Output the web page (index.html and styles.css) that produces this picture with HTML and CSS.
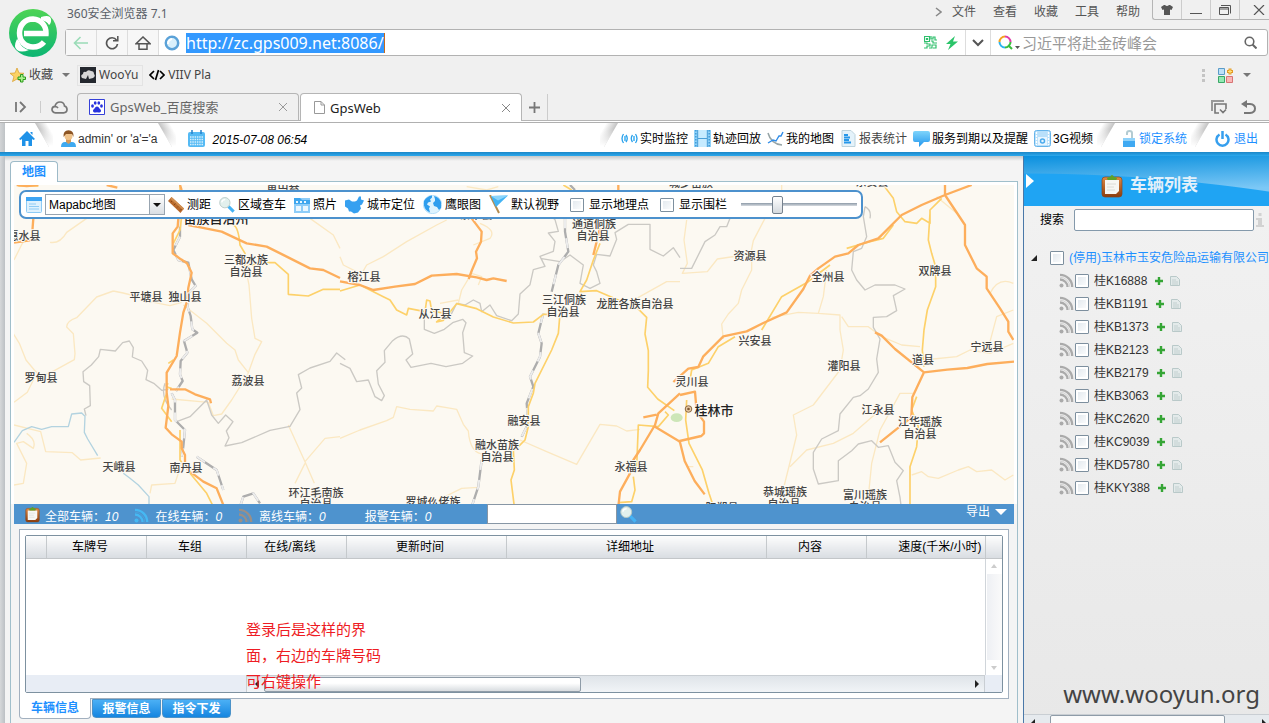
FILE: index.html
```html
<!DOCTYPE html>
<html lang="zh-CN">
<head>
<meta charset="utf-8">
<title>GpsWeb</title>
<link rel="stylesheet" href="styles.css">
</head>
<body>
<svg class="defs" aria-hidden="true">
  <defs>
    <linearGradient id="g-green" x1="0" y1="0" x2="0" y2="1"><stop offset="0" stop-color="#4ed455"/><stop offset="1" stop-color="#0cb573"/></linearGradient>
    <linearGradient id="g-blue" x1="0" y1="0" x2="0" y2="1"><stop offset="0" stop-color="#7fd4fb"/><stop offset="1" stop-color="#2196ee"/></linearGradient>
    <linearGradient id="g-edge" gradientUnits="userSpaceOnUse" x1="5" y1="9" x2="14" y2="4"><stop offset="0" stop-color="#c2c2c2"/><stop offset="1" stop-color="#fff"/></linearGradient>
    <linearGradient id="g-fade" gradientUnits="userSpaceOnUse" x1="0" y1="6" x2="0" y2="23"><stop offset="0" stop-color="#fff" stop-opacity="0"/><stop offset="1" stop-color="#fff"/></linearGradient>
    <linearGradient id="g-wood" x1="0" y1="0" x2="0" y2="1"><stop offset="0" stop-color="#e08a45"/><stop offset="1" stop-color="#8a3c0e"/></linearGradient>
    <symbol id="i-fold" viewBox="0 0 18 24"><path d="M0 0l14 24h4V0z" fill="url(#g-edge)"/><path d="M0 0l14 24h4V0z" fill="url(#g-fade)"/></symbol>
    <symbol id="i-rss" viewBox="0 0 15 15"><circle cx="2.5" cy="12.5" r="2"/><path d="M1 6.5A7.5 7.5 0 0 1 8.5 14M1 1.8A12.2 12.2 0 0 1 13.2 14" fill="none" stroke="currentColor" stroke-width="2.3"/><path d="M1 4.2A9.8 9.8 0 0 1 10.8 14" fill="none" stroke="currentColor" stroke-width=".8" opacity=".5"/></symbol>
    <symbol id="i-plus" viewBox="0 0 10 10"><path d="M5 1v8M1 5h8" stroke="#35a535" stroke-width="2.4" fill="none"/></symbol>
    <symbol id="i-doc" viewBox="0 0 10 10"><path d="M.5 .5h6l3 3v6h-9z" fill="#e3eaea" stroke="#b9c9c9"/><path d="M2 4h4M2 6h6M2 8h6" stroke="#b5c6c6" stroke-width=".7"/></symbol>
    <symbol id="i-clip" viewBox="0 0 22 24"><rect x="1" y="3" width="20" height="20" rx="3" fill="url(#g-wood)" stroke="#8a461c" stroke-width=".7"/><path d="M4 6h14v11l-3 3H4z" fill="#f7f7f4"/><path d="M6 10h9M6 13h7M6 16h8" stroke="#d5d5d0" stroke-width=".8"/><path d="M6 5q0-2 3-2 2-4 4 0 3 0 3 2l-1 1H7z" fill="#5da227"/></symbol>
    <symbol id="i-mag" viewBox="0 0 18 18"><path d="M10.5 10.5l6 6" stroke="#45b2f4" stroke-width="3.4"/><circle cx="6.6" cy="6.4" r="5.8" fill="#e2f0ed" stroke="#b6c9c6"/><path d="M3 6a4 4 0 0 1 4-3" fill="none" stroke="#fff" stroke-width="1.5"/></symbol>
  </defs>
</svg>

<header class="browser">
  <svg class="logo" viewBox="0 0 48 48"><circle cx="24" cy="24" r="24" fill="url(#g-green)"/><path d="M15 24.500h22A13.500 13.500 0 0 0 24 10C16 10 10.500 16 10.500 24S16 38 24 38q7 0 11-5" fill="none" stroke="#fff" stroke-width="5.500"/><path d="M32 8q9-3 10 2 .500 4-2 6-2-4-8-5zM8 30q-4 8 0 11 4 3 12 0-7-1-10-9z" fill="#fff"/></svg>
  <div class="title-row">
    <span class="app-title">360安全浏览器 7.1</span>
    <nav class="menu"><svg class="chev" viewBox="0 0 7 10"><path d="M1 1l5 4-5 4"/></svg><button>文件</button><button>查看</button><button>收藏</button><button>工具</button><button>帮助</button></nav>
    <div class="window-buttons">
      <button aria-label="皮肤"><svg viewBox="0 0 12 10"><path d="M3 0h1q2 2 4 0h1l3 2-1.500 3L9 4.500V10H3V4.500L1.500 5 0 2z" fill="#555"/></svg></button>
      <button aria-label="最小化"><svg viewBox="0 0 12 10"><path d="M0 8.500h12" stroke="#555"/></svg></button>
      <button aria-label="还原"><svg viewBox="0 0 12 10"><path d="M.5 2.500h9v7h-9zM.5 4h9M2 .5h9.500v8" fill="none" stroke="#555"/></svg></button>
      <button aria-label="关闭"><svg viewBox="0 0 12 10"><path d="M1 0l10 10M11 0L1 10" stroke="#555" stroke-width="1.200"/></svg></button>
    </div>
  </div>
  <div class="address">
    <button class="nav-btn" aria-label="后退"><svg viewBox="0 0 16 14"><path d="M15 7H2M7.500 1l-6 6 6 6" fill="none" stroke="#9bdcb8" stroke-width="1.600"/></svg></button>
    <button class="nav-btn" aria-label="刷新"><svg viewBox="0 0 16 14"><path d="M12.500 4A5.500 5.500 0 1 0 13.500 8" fill="none" stroke="#555" stroke-width="1.700"/><path d="M9 4.800h4.800V0" fill="none" stroke="#555" stroke-width="1.500"/></svg></button>
    <button class="nav-btn" aria-label="主页"><svg viewBox="0 0 16 14"><path d="M4 7v6.300h8V7M1 7.700L8 1l7 6.700z" fill="none" stroke="#555" stroke-width="1.500"/></svg></button>
    <svg class="site" viewBox="0 0 16 16"><circle cx="8" cy="8" r="6.200" fill="#d9f0fc" stroke="#5ba2d8" stroke-width="2.500"/><path d="M4 9a5 5 0 0 1 4-5" stroke="#fff" stroke-width="2" fill="none"/></svg>
    <label class="url"><span class="selected" contenteditable="true" role="textbox" aria-label="网址">http://zc.gps009.net:8086/</span></label>
    <svg class="qr" viewBox="0 0 13 13"><path d="M.5 .5h5v5h-5zM2.500 2.500h1v1h-1zM7 0v3h2V1h2v3h2M7 5h2v2h4M0 7h3v1h3v2H3v2H0M5 12h3V9h2M9 9h3v3H9" fill="none" stroke="#2fbf6c" stroke-width="1.200"/></svg>
    <svg class="bolt" viewBox="0 0 12 14"><path d="M9 0L0 8h4.500L2 14 12 5.500H7z" fill="#2bc469"/></svg>
    <button class="down" aria-label="历史"><svg viewBox="0 0 12 8"><path d="M1 1l5 5 5-5" fill="none" stroke="#555" stroke-width="2"/></svg></button>
    <div class="web-search">
      <svg class="so" viewBox="0 0 22 15"><g fill="none" stroke-width="2"><path d="M1.500 7A5.500 5.500 0 0 1 7 1.500" stroke="#f4a11e"/><path d="M7 1.500A5.500 5.500 0 0 1 12.500 7" stroke="#e03ca8"/><path d="M1.500 7A5.500 5.500 0 0 0 7 12.500" stroke="#2cb4ee"/><path d="M12.500 7A5.500 5.500 0 0 1 7 12.500M10 10l4 4" stroke="#39bd3e"/></g><path d="M17 11h5l-2.500 3z" fill="#555"/></svg>
      <input type="text" aria-label="搜索" placeholder="习近平将赴金砖峰会">
      <svg class="find" viewBox="0 0 13 13"><circle cx="5.500" cy="5.500" r="4.300" fill="none" stroke="#666" stroke-width="1.600"/><path d="M8.500 8.500l4 4" stroke="#666" stroke-width="2"/></svg>
    </div>
  </div>
  <div class="bookmarks">
    <button class="fav"><svg viewBox="0 0 16 15"><path d="M7 0l2 5 5 .3-4 3.300 1.500 5L7 11l-4.500 2.600L4 8.600 0 5.300 5 5z" fill="#fbd264" stroke="#dba339" stroke-width=".8"/><path d="M10.500 6.500h2.500v2.500h2.500v2.500H13V14h-2.500v-2.500H8V9h2.500z" fill="#a9f08a" stroke="#2b9a1d"/></svg>收藏<i class="tri"></i></button>
    <a href="#" class="bm boxed"><svg viewBox="0 0 16 16"><path d="M0 0h16v16H0z" fill="#24282f"/><path d="M2 11q-2-3 1-4 0-3 3-2 2-3 5-1 3 0 3 3 2 2-1 4l-4 1-1-4-2 4z" fill="#d7d7d7"/></svg>WooYu</a>
    <a href="#" class="bm"><svg viewBox="0 0 16 10"><path d="M5 1L1 5l4 4M11 1l4 4-4 4M9.500 0l-3 10" fill="none" stroke="#000" stroke-width="1.700"/></svg>VIIV Pla</a>
    <span class="bm-tools"><svg class="dots" viewBox="0 0 3 13"><path d="M0 0h3v3H0zM0 5h3v3H0zM0 10h3v3H0z" fill="#c4c4c4"/></svg><svg class="apps" viewBox="0 0 16 15"><path d="M.5 .5h6v6h-6z" fill="#bde0f7" stroke="#5a9cc9"/><path d="M.5 8.500h6v6h-6z" fill="#93e9b4" stroke="#3aa767"/><path d="M8.500 8.500h6v6h-6z" fill="#fab6b6" stroke="#d77474"/><path d="M12 .5v6M9 3.500h6" stroke="#e39a26" stroke-width="3"/><path d="M12 1.500v4M10 3.500h4" stroke="#ffe27a" stroke-width="1.200"/></svg><i class="tri"></i></span>
  </div>
  <div class="tabs">
    <svg class="side" viewBox="0 0 12 12"><path d="M1 1v10M5 1l5 5-5 5" fill="none" stroke="#777" stroke-width="1.800"/></svg>
    <i class="bar"></i>
    <svg class="cloud" viewBox="0 0 17 13"><path d="M4.500 11.800Q1 11.500 1 8.300 1.200 5.500 4 5.300 5 1 9 1t4.500 4Q16 5.700 16 8.400 16 11.500 12.500 11.800zM4 5.500q2 0 3 1.500" fill="none" stroke="#777" stroke-width="1.700"/></svg>
    <div class="tab"><svg class="paw" viewBox="0 0 16 16"><path d="M.5 .5h15v15H.5z" fill="#fff" stroke="#3540d8"/><g fill="#2833dd"><ellipse cx="3.500" cy="7" rx="1.400" ry="1.800"/><ellipse cx="6.200" cy="4" rx="1.400" ry="1.800"/><ellipse cx="9.800" cy="4" rx="1.400" ry="1.800"/><ellipse cx="12.500" cy="7" rx="1.400" ry="1.800"/><path d="M8 7.500q1.500 0 2.500 2 2.500 2 1 3.500-1 1-3.500.3-2.500.7-3.500-.3-1.500-1.500 1-3.500 1-2 2.500-2z"/></g></svg><span>GpsWeb_百度搜索</span><button aria-label="关闭标签"><svg viewBox="0 0 8 8"><path d="M0 0l8 8M8 0L0 8" stroke="#999"/></svg></button></div>
    <div class="tab active"><svg class="page" viewBox="0 0 11 13"><path d="M.5 .5H7l3.500 3.500v8.500H.5zM7 .5V4h3.500" fill="#fff" stroke="#999"/></svg><span>GpsWeb</span><button aria-label="关闭标签"><svg viewBox="0 0 8 8"><path d="M0 0l8 8M8 0L0 8" stroke="#888"/></svg></button></div>
    <button class="add" aria-label="新标签"><svg viewBox="0 0 11 11"><path d="M5.500 0v11M0 5.500h11" stroke="#777" stroke-width="1.800"/></svg></button>
    <span class="tab-tools"><svg viewBox="0 0 16 15"><path d="M1 11V1h12" fill="none" stroke="#999" stroke-width="2"/><path d="M8 13H4V4h11v5M9 9.500l3 3 3-3" fill="none" stroke="#777" stroke-width="1.600"/></svg><svg viewBox="0 0 16 15"><path d="M3 4h6q5 .5 5 4.500T9 13H3" fill="none" stroke="#777" stroke-width="2"/><path d="M0 4l6-4v8z" fill="#777"/></svg></span>
  </div>
</header>

<div class="app">
  <header class="topbar">
    <a href="#" class="home" aria-label="主页"><svg viewBox="0 0 16 15"><path d="M8 0l8 8-1.500 1L13 8v7h-3.500v-5h-3v5H3V8L1.500 9 0 8zM11.500 1h2v3l-2-2z" fill="#1f92e8"/></svg></a>
    <svg class="fold" viewBox="0 0 18 24"><use href="#i-fold"/></svg>
    <span class="user"><svg viewBox="0 0 15 17"><path d="M0 17q0-5 4-5h7q4 0 4 5z" fill="#3ea9f0"/><path d="M5 9h5v3l-2.500 2L5 12z" fill="#d79a58"/><circle cx="7.500" cy="6" r="4" fill="#efc28a"/><path d="M2.500 7Q2 .2 7.500 .2T12.500 7l-1.500-3H5z" fill="#8d5524"/></svg>admin' or 'a'='a</span>
    <svg class="fold" viewBox="0 0 18 24"><use href="#i-fold"/></svg>
    <span class="clock"><svg viewBox="0 0 17 17"><rect y="2" width="17" height="15" rx="2" fill="#55baf4"/><path d="M4 0v4M13 0v4" stroke="#2680c8" stroke-width="1.500"/><path d="M2 7h13M2 9.500h13M2 12h13M2 14.500h13" stroke="#d5effc" stroke-width="1.600" stroke-dasharray="1.500 .8"/></svg><time>2015-07-08 06:54</time></span>
    <svg class="fold right" viewBox="0 0 18 24"><g transform="matrix(-1 0 0 1 18 0)"><use href="#i-fold"/></g></svg>
    <nav class="links">
      <a href="#"><svg viewBox="0 0 17 17"><g fill="none" stroke="#2aa1ec" stroke-width="1.300"><path d="M2.500 4q-3 4.500 0 9M5 5q2.500 3.500 0 7M11.500 5q-2.500 3.500 0 7M14.500 4q3 4.500 0 9"/></g><path d="M3 6h2v5H3zM12 6h2v5h-2z" fill="#69c2f5"/></svg>实时监控</a>
      <a href="#"><svg viewBox="0 0 17 17"><path d="M0 0h17v17H0z" fill="#8fd1f8"/><path d="M4 0h9v17H4z" fill="#c6ebff"/><path d="M4 8.500h9M3.700 0v17M13.300 0v17" stroke="#4a9fd8"/><path d="M1.800 0v17M15.200 0v17" stroke="#3f9bd8" stroke-width="1.500" stroke-dasharray="1.500 1.500"/></svg>轨迹回放</a>
      <a href="#"><svg viewBox="0 0 17 17"><path d="M1 3q3 11 14 12" fill="none" stroke="#96a4a6" stroke-width="1.500"/><path d="M1 13l5-3 3 1 3-5h2l2-4" fill="none" stroke="#2f8ce8" stroke-width="1.400"/></svg>我的地图</a>
      <a href="#" class="soft"><svg viewBox="0 0 17 17"><path d="M2 .5h9l4 4v12H2z" fill="#e4f2fa" stroke="#bcd2dc"/><path d="M4 5h4M4 7.500h6M4 10h5M4 12.500h7" stroke="#2797e9" stroke-width="1.900"/></svg>报表统计</a>
      <a href="#"><svg viewBox="0 0 17 17"><path d="M2 1h13q2 0 2 2v7q0 2-2 2h-4l-5 5v-5H2q-2 0-2-2V3q0-2 2-2z" fill="url(#g-blue)"/></svg>服务到期以及提醒</a>
      <a href="#"><svg viewBox="0 0 17 17"><rect x=".5" y=".5" width="16" height="16" rx="2" fill="#b9e0fa" stroke="#66b4ea"/><rect x="4" y="7" width="9" height="8" fill="#e9f6ff"/><circle cx="8.500" cy="11" r="2" fill="none" stroke="#4cabed" stroke-width="1.500"/><path d="M2.500 2v13M14.500 2v13" stroke="#fff" stroke-width="1.300" stroke-dasharray="2 1"/></svg>3G视频</a>
    </nav>
    <svg class="fold right" viewBox="0 0 18 24"><g transform="matrix(-1 0 0 1 18 0)"><use href="#i-fold"/></g></svg>
    <a href="#" class="act lock"><svg viewBox="0 0 12 17"><path d="M4 5V3q0-2 2.500-2T9 3v5" fill="none" stroke="#b3cbd2" stroke-width="2"/><path d="M0 8h12v9H0z" fill="#3fa9f2"/><path d="M0 8h12v3H0z" fill="#8fd2fa"/></svg>锁定系统</a>
    <svg class="fold right" viewBox="0 0 18 24"><g transform="matrix(-1 0 0 1 18 0)"><use href="#i-fold"/></g></svg>
    <a href="#" class="act exit"><svg viewBox="0 0 15 16"><path d="M4.500 3.500a6 6 0 1 0 6 0M7.500 0v8" fill="none" stroke="#369fee" stroke-width="2.500"/></svg>退出</a>
  </header>

  <div class="body">
    <i class="edge"></i>
    <main class="work">
      <div class="main-tab"><button>地图</button></div>
      <div class="frame">
        <section class="map">
          <svg class="canvas" viewBox="14 185 1000 319" preserveAspectRatio="xMidYMid slice">
            <rect x="14" y="185" width="1000" height="319" fill="#fcf9f2"/>
            <g transform="translate(0 180) scale(.33333)">
              <g class="minor">
                <path d="M150 187q30 5 50-30l60-42M42 240l30-60M340 333q60 10 110 32l60 12 35-10M340 333l-50 18-60 62q-30 10-30 28l20 20 5 60-2 18-60 33-40 18-20-20-25-30-20-50-22-35M104 592l-22 45-40 30M550 375l70 55 60 60 25 20 10 30 30 38 20-55 20-38-20-10-10-60-8-100q-8-30-8-60M745 580l-50 80-30 42-25 5-15-40-110-10M930 115l70 50 20 40M42 735l80 20 15 60 80 3 25 22 60-6M80 760q30 20 20 45l-30-20-20 5 30 60-10 60-28 5M450 940l5-25 70-5 20-60M865 735l50 110 28 65M915 845l60-70 45-5M915 850l-30 60"/>
              </g>
              <g class="admin"><path d="M258 707l-5-20 18-10-2-60-18-12-2-30 25-20 22-25 5-22 45 5 22-25 20-5 12 20-3 28 28 12 18 28-5 28 25 12 22 20 20-3M495 610q-15 40 20 80M530 725l40-15 50-50 15 45 20 25 22-25 22 20-20 28 8 20-12 25 50-10 35-15 50-22 60-12 30-50-10-50 15-15-10-40 35-20 60-20 20-25 26 20"/></g>
              <g class="river"><path d="M42 787l25-35 28-12 30 8 30-8h50l10-38 30-3 10 10-2 48 10 20 30 50M370 880l20 15 25 20 32 35v30"/></g>
              <g class="rail"><path d="M540 110v60l-20 40 15 30 30 8 10 50 12 20-20 20-5 40 10 30 5 40 15 10-40 25 10 35-20 25-2 40 8 20-20 30M515 640l10 20v60l30 30-5 50-5 30M590 830l60 40 20 60M720 980l10-30 30-10 20 30"/></g>
              <g class="rail-light"><path d="M540 110v60l-20 40 15 30 30 8 10 50 12 20-20 20-5 40 10 30 5 40 15 10-40 25 10 35-20 25-2 40 8 20-20 30M515 640l10 20v60l30 30-5 50-5 30M590 830l60 40 20 60M720 980l10-30 30-10 20 30"/></g>
              <g class="second"><path d="M700 135q15 5 20 60l15 25v38l70-10 20 0 40 35v60l60 5 45-20 50 0M545 110l-5 40-20 40M520 540l-15 10M505 610q-15 10 10 15M500 640l-15 45 30 40M540 750v90l30 40 50 60 20 40M540 5v30M55 18h60"/></g>
              <g class="major"><path d="M100 115l-5 65-53 8M50 15l30 3 35-3M320 15l32 8M540 15l5 15M535 115l-2 25-15 20v60l25 18 18 12 14 28-10 45-5 45-10 30-10 60-10 70-30 50v60l5 40-8 65 18 20 30 22v20l10 20v30l15 20 40 30 40 20 20 50 10 30M510 628h45l30 15 45 15 3 12M565 135l40 8 60 12 75 35 60 10 60 30 70 35 40 5 50 24"/></g>
            </g>
            <g transform="translate(340 180) scale(.33333)">
              <g class="minor"><path d="M60 290l20-35 50-25 70-45 90-50 30-15M0 230l10 25 50 25M420 130q50 20 30 45l-50 20M355 370l10-40 30-50 30 10-10 25M300 370l55-10M0 775l60-25 80-28 20-10 10-32 40 8 70 5 10-15 30 5 30 5 20 45 15 20q5 70 50 70M540 780l80 35 90 38 70-120 50 5 30 15 40-5M890 355l90-50h40M315 950l50-25 50-3M380 20l60 10 35-10"/></g>
              <g class="admin"><path d="M0 550l30 15 20 40 35-5 20 50 20 12 8-15-18-35-5-40 25-25-2-35 25-30q30-25 50-5l10 45-20 18 15 22 60-12 45 10 50-10 30-22-25-10-5-60 10-30-10-10-30 10-25 20-30 12-30-12v-45M330 410l20-40 25 5 25-15 20 10 5 25 25-20 20 32 45 15 20-20 5-60 30-28 10-45 35-10-15-30 40-15 5-30-20-25 30-5-10-35-20-20v-20M600 235l60 10 30-20 40 30-10 55 30 15 30-15-10-35-10-20 10-32 40 5 20-50-5-20 40-25h65v75l40 20 30-25 20 30"/></g>
              <g class="rail"><path d="M675 115v40l10 60-30 40-20 80M610 400l-15 60 10 30-5 40-30 60 10 30-20 50 5 60-20 40M425 840l-10 80-20 60M690 15l15 15"/></g>
              <g class="rail-light"><path d="M675 115v40l10 60-30 40-20 80M610 400l-15 60 10 30-5 40-30 60 10 30-20 50 5 60-20 40M425 840l-10 80-20 60"/></g>
              <g class="second"><path d="M0 333l60-18 70 35 20 10 20 30 30 15 5-20 50 10 5-35 10 3 5 30 45 8-30 25 20-5 40-50 60 15 50 25 60 18 60-3 30-23h30M780 190l-20 50-20 60-20 35 50-3 70 30 50 20 30 30-5 50 10 50v60l-2 50 30 35 50 35M660 400l-5 60-20 50-50 100-5 30-15 40v60l-10 40-20 20M520 810l3 60-10 30 10 80M890 860l5-125 60 5 30-35-10-10M880 890l5 40-10 35-40 3M670 15l25 15"/></g>
              <g class="major"><path d="M0 304l60 11 40 15 65-10 60-8 50-25 75-5 60 10 30 8 20-5 40 8M395 115l30 40-2 30-15 30 3 20-15 35-10 27M780 145l-20 80M835 980l5-45 30-55 10-40 20-30 45-75 10-35 65-60M910 712l40-8M945 740l75 45M835 15v30"/></g>
              <ellipse cx="1010" cy="713" rx="18" ry="13" fill="#cde6b8"/>
            </g>
            <g transform="translate(680 180) scale(.33333)">
              <g class="minor"><path d="M20 120l-8 60 10 70-15 30 75-5 30-38 100-15 8-40 35-67M215 235v35l-30 60-10 40-30 32-20 30 5 45M440 270l-10 80-15 50-60-3-80 15M415 400l65 5v45l10 60-10 60-80 105-60 30 10 60-22 90-15 60M485 410l20 30h60l40 30 60 25 55 5M730 540l100-10 40-20 60 10 70-30M700 640h-40l-60 110-25 100-10 100M600 690l-80 70-60 30-80 20-50 50M695 885l30-10 20 15 30 5 60-25 30-10 25 15 45-5 40 30 25-15M770 50l60 50M1000 310q-45-20-70 30M1000 390l-50 20-20 75M305 15v15M20 860h20"/></g>
              <g class="admin"><path d="M0 265h35l40-80 30-20 15-25 20 0 10-25M555 80l-5 30 10 60-15 35-25 10-5 55 15 30 25 30 30-15h60l30 12-35 20 10 45-30 18-40 2v30l20 35-10 60 5 40-30 50-25 20-20 5-40 50-5 50-50 25-25 40v50l15 45 60-10v-60l40-30 20-20 40-10 20 20 30-5 20 50 25 25-20 30 10 50 5 40M555 80q20 10 15 35"/></g>
              <g class="second"><path d="M610 15l30 40 10 40 25 30 35 5 15-15 25 15V90l20-20 15-15M750 100l-5 80 10 40 12 40 0 60-25 70-10 60-5 60 5 50M30 600l5-30 50-20 30-50 50-30M245 450l60-100 80-45 20-15M410 285l40-30M500 205l70-20 40-10 30-40M20 660l-3 60 10 70 40 80 20 70 10 30M710 650l-15 40 20 50-5 60-20 60v120"/></g>
              <g class="major"><path d="M875 15l-80 30-70 30-60 30-70 70-60 20-30 25-40 10-50 35-25 22-20 40-50 70-70 32-50 25-70 15-60 60-15 32-30 5-45 40M795 15v30l60 90v60l35 70 30 25v35l40 60 25 40v30l15 25M585 457l20 10 40 40 87 70 70-8 60-5 60-12 80-7M732 577l-35 75-3 60-50 40-44 35M0 645l45-10 5 60 22 30v35l-8 8-65 15 15 60 30 60 30 40"/></g>
            </g>
            <circle cx="688.500" cy="409" r="3.300" fill="#e7c9a3" stroke="#8b6843"/><circle cx="688.500" cy="409" r="1.300" fill="#805a35"/>
            <g class="place">
              <text x="24" y="240">惠水县</text><text x="283" y="189">雷山县</text><text x="246" y="264">三都水族</text><text x="246" y="276">自治县</text><text x="364" y="281">榕江县</text><text x="146" y="301">平塘县</text><text x="185" y="301">独山县</text><text x="435" y="318">从江县</text><text x="248" y="385">荔波县</text><text x="41" y="382">罗甸县</text><text x="119" y="471">天峨县</text><text x="186" y="472">南丹县</text><text x="316" y="497">环江毛南族</text><text x="316" y="508">自治县</text><text x="433" y="506">罗城仫佬族</text><text x="524" y="425">融安县</text><text x="497" y="449">融水苗族</text><text x="497" y="461">自治县</text><text x="631" y="471">永福县</text><text x="564" y="304">三江侗族</text><text x="563" y="316">自治县</text><text x="635" y="308">龙胜各族自治县</text><text x="594" y="228">通道侗族</text><text x="593" y="240">自治县</text><text x="476" y="219">黎平县</text><text x="750" y="260">资源县</text><text x="828" y="281">全州县</text><text x="935" y="275">双牌县</text><text x="755" y="345">兴安县</text><text x="692" y="386">灵川县</text><text x="844" y="370">灌阳县</text><text x="987" y="351">宁远县</text><text x="923" y="364">道县</text><text x="878" y="414">江永县</text><text x="920" y="426">江华瑶族</text><text x="920" y="438">自治县</text><text x="785" y="496">恭城瑶族</text><text x="784" y="508">自治县</text><text x="865" y="499">富川瑶族</text><text x="865" y="511">自治县</text><text x="722" y="512">阳朔县</text><text x="691" y="187">城步苗族</text><text x="872" y="186">东安县</text>
              <text class="city" x="714" y="415">桂林市</text><text class="city" x="216" y="223">苗族自治州</text>
            </g>
          </svg>
          <div class="map-tools">
            <svg class="w16" viewBox="0 0 16 16"><rect x=".5" y=".5" width="15" height="15" rx="1" fill="#dff1fd" stroke="#8ecbf5"/><path d="M0 0h16v4H0z" fill="#3da4f3"/><path d="M3 7h7M3 9.500h10M3 12h10" stroke="#8fcbf5"/></svg>
            <span class="picker"><select aria-label="地图类型"><option>Mapabc地图</option></select></span>
            <button><svg class="w16" viewBox="0 0 16 16"><path d="M3.500 0L16 11.500 12.500 16 0 4z" fill="#b96a2c"/><path d="M3.500 0L16 11.500l-1 1.500L2.300 1.800z" fill="#d08e50"/><path d="M3 5l1-1M6 8l1.500-1.500M9 10.500l1-1M12 13.500l1.500-1.500" stroke="#713a10" stroke-width=".7"/></svg>测距</button>
            <button><svg class="w16" viewBox="0 0 18 18"><use href="#i-mag"/></svg>区域查车</button>
            <button><svg class="w16" viewBox="0 0 16 16"><path d="M0 1h16v15H0z" fill="#8dccf8"/><path d="M0 1h6l2 2h8v4H0z" fill="#3ea6ee"/><path d="M2 4h2v2H2zM6 4h2v2H6zM10 4h2v2h-2zM2 9h5v5H2zM9 9h5v5H9z" fill="#eaf6fe"/></svg>照片</button>
            <button><svg class="w19" viewBox="0 0 19 16"><path d="M0 4l4-1 3 2 3 0 2-1 2-4 2 0 0 3 3 1-2 4-2 1 1 3-3 4-4 1-3-2-2 0-1-3-3-2z" fill="#36a0f0"/></svg>城市定位</button>
            <button><svg class="w19" viewBox="0 0 19 19"><circle cx="9.500" cy="9.500" r="9.200" fill="#def3fe" stroke="#93d0f6" stroke-width=".6"/><path d="M1 6q3-5 8-5.500l0 2-2 2 1 2-3 1-1 2 3 2-1 2 1 4q-5-2-6-7zM11 1q5 1 7 6l0 6-2 2-2-3-3-1-1-3 2-2 0-2z" fill="#2f9eee"/></svg>鹰眼图</button>
            <button><svg class="w19" viewBox="0 0 19 19"><path d="M1 0l9 18" stroke="#b58b4d" stroke-width="2"/><path d="M2 1l17-.5L7 12z" fill="#42b3f4"/><path d="M2 1l17-.5-10 5z" fill="#8ad4fb"/></svg>默认视野</button>
            <label class="first"><input type="checkbox">显示地理点</label>
            <label><input type="checkbox">显示围栏</label>
            <input class="zoom" type="range" min="0" max="100" value="29" aria-label="缩放">
          </div>
        </section>
        <section class="status">
          <svg class="clip" viewBox="0 0 22 24"><use href="#i-clip"/></svg>
          <span>全部车辆：<em>10</em></span>
          <svg class="rss on" viewBox="0 0 15 15"><use href="#i-rss"/></svg><span>在线车辆：<em>0</em></span>
          <svg class="rss off" viewBox="0 0 15 15"><use href="#i-rss"/></svg><span>离线车辆：<em>0</em></span>
          <span class="alarm">报警车辆：<em>0</em></span>
          <input type="text" aria-label="查找车辆">
          <svg class="glass" viewBox="0 0 18 18"><use href="#i-mag"/></svg>
          <button class="export">导出<i></i></button>
        </section>
        <section class="panel">
          <div class="grid">
            <table>
              <colgroup><col class="c-s"><col class="c-m"><col class="c-m"><col class="c-m"><col class="c-t"><col><col class="c-m"><col class="c-v"><col class="c-e"></colgroup>
              <thead><tr><th></th><th>车牌号</th><th>车组</th><th>在线/离线</th><th>更新时间</th><th>详细地址</th><th>内容</th><th class="end">速度(千米/小时)</th><th></th></tr></thead>
            </table>
            <div class="rows"><div class="vscroll"><i class="up"></i><b></b><i class="dn"></i></div></div>
            <div class="hrow"><div class="hscroll"><i class="lt"></i><b></b><i class="rt"></i></div><i class="corner"></i></div>
            <p class="note">登录后是这样的界<br>面，右边的车牌号码<br>可右键操作</p>
          </div>
        </section>
        <nav class="sheet-tabs"><button class="on">车辆信息</button><button>报警信息</button><button>指令下发</button></nav>
      </div>
    </main>

    <aside class="side-panel">
      <div class="side-head"><i class="fold-arrow"></i><svg viewBox="0 0 22 24"><use href="#i-clip"/></svg><h2>车辆列表</h2></div>
      <div class="side-search"><label for="q">搜索</label><input id="q" type="text"><svg viewBox="0 0 8 14"><path d="M2.500 0h3v3h-3zM0 5h6v7h2v2H0v-2h2V7H0z" fill="#d2d2d2"/></svg></div>
      <div class="group"><i></i><label><input type="checkbox">(停用)玉林市玉安危险品运输有限公司</label></div>
      <ul class="tree">
        <li><svg class="sig" viewBox="0 0 15 15"><use href="#i-rss"/></svg><label><input type="checkbox">桂K16888</label><svg class="sm" viewBox="0 0 10 10"><use href="#i-plus"/></svg><svg class="sm" viewBox="0 0 10 10"><use href="#i-doc"/></svg></li>
        <li><svg class="sig" viewBox="0 0 15 15"><use href="#i-rss"/></svg><label><input type="checkbox">桂KB1191</label><svg class="sm" viewBox="0 0 10 10"><use href="#i-plus"/></svg><svg class="sm" viewBox="0 0 10 10"><use href="#i-doc"/></svg></li>
        <li><svg class="sig" viewBox="0 0 15 15"><use href="#i-rss"/></svg><label><input type="checkbox">桂KB1373</label><svg class="sm" viewBox="0 0 10 10"><use href="#i-plus"/></svg><svg class="sm" viewBox="0 0 10 10"><use href="#i-doc"/></svg></li>
        <li><svg class="sig" viewBox="0 0 15 15"><use href="#i-rss"/></svg><label><input type="checkbox">桂KB2123</label><svg class="sm" viewBox="0 0 10 10"><use href="#i-plus"/></svg><svg class="sm" viewBox="0 0 10 10"><use href="#i-doc"/></svg></li>
        <li><svg class="sig" viewBox="0 0 15 15"><use href="#i-rss"/></svg><label><input type="checkbox">桂KB2179</label><svg class="sm" viewBox="0 0 10 10"><use href="#i-plus"/></svg><svg class="sm" viewBox="0 0 10 10"><use href="#i-doc"/></svg></li>
        <li><svg class="sig" viewBox="0 0 15 15"><use href="#i-rss"/></svg><label><input type="checkbox">桂KB3063</label><svg class="sm" viewBox="0 0 10 10"><use href="#i-plus"/></svg><svg class="sm" viewBox="0 0 10 10"><use href="#i-doc"/></svg></li>
        <li><svg class="sig" viewBox="0 0 15 15"><use href="#i-rss"/></svg><label><input type="checkbox">桂KC2620</label><svg class="sm" viewBox="0 0 10 10"><use href="#i-plus"/></svg><svg class="sm" viewBox="0 0 10 10"><use href="#i-doc"/></svg></li>
        <li><svg class="sig" viewBox="0 0 15 15"><use href="#i-rss"/></svg><label><input type="checkbox">桂KC9039</label><svg class="sm" viewBox="0 0 10 10"><use href="#i-plus"/></svg><svg class="sm" viewBox="0 0 10 10"><use href="#i-doc"/></svg></li>
        <li><svg class="sig" viewBox="0 0 15 15"><use href="#i-rss"/></svg><label><input type="checkbox">桂KD5780</label><svg class="sm" viewBox="0 0 10 10"><use href="#i-plus"/></svg><svg class="sm" viewBox="0 0 10 10"><use href="#i-doc"/></svg></li>
        <li><svg class="sig" viewBox="0 0 15 15"><use href="#i-rss"/></svg><label><input type="checkbox">桂KKY388</label><svg class="sm" viewBox="0 0 10 10"><use href="#i-plus"/></svg><svg class="sm" viewBox="0 0 10 10"><use href="#i-doc"/></svg></li>
      </ul>
      <div class="watermark">www.wooyun.org</div>
      <div class="side-scroll"><i class="lt"></i><b></b><i class="rt"></i></div>
    </aside>
  </div>
</div>
</body>
</html>
```

FILE: styles.css
```css
* { box-sizing: border-box; }
html, body { height: 100%; }
body { margin: 0; display: flex; flex-direction: column; overflow: hidden; background: #f0f0f0; color: #000; font: 12px/16px "Liberation Sans", "Noto Sans CJK SC", sans-serif; }
button, input, select { margin: 0; padding: 0; border: 0; background: none; font: inherit; color: inherit; }
a { color: inherit; text-decoration: none; }
svg { display: block; flex: none; }
i { flex: none; }
button { white-space: nowrap; }
.defs { position: absolute; width: 0; height: 0; }
.tri { border: 4px solid transparent; border-top-color: #777; border-bottom-width: 0; }

/* browser chrome */
.browser { position: relative; flex: none; color: #444; font-family: "Noto Sans", "Noto Sans CJK SC", sans-serif; border-bottom: 1px solid #b0b0b0; background: linear-gradient(#f0f0f0, #f0f0f0) 0 0 / 100% 121px no-repeat #fff; }
.logo { position: absolute; left: 9px; top: 9px; width: 48px; height: 48px; }
.title-row { display: flex; align-items: flex-start; height: 29px; padding-left: 67px; }
.app-title { flex: 1; padding-top: 6px; color: #5a6068; }
.menu { display: flex; align-items: center; gap: 17px; height: 24px; color: #555; margin-right: 12px; }
.chev { width: 7px; height: 10px; margin-right: -7px; fill: none; stroke: #888; stroke-width: 1.500; }
.window-buttons { display: flex; height: 20px; border: 1px solid #b5b5b5; border-width: 0 0 1px 1px; border-radius: 0 0 0 3px; margin-right: -8px; }
.window-buttons button { width: 29px; display: grid; place-items: center; border-right: 1px solid #ccc; }
.window-buttons button:last-child { width: 37px; border: 0; }
.window-buttons svg { width: 12px; height: 10px; }
.address { display: flex; align-items: center; height: 27px; margin-left: 65px; margin-right: 1px; border: 1px solid #b2b2b2; border-radius: 3px; background: #fff; }
.nav-btn { width: 31px; height: 25px; display: grid; place-items: center; background: #f7f7f7; border-right: 1px solid #ddd; }
.nav-btn svg { width: 16px; height: 14px; }
.site { width: 16px; height: 16px; margin: 0 6px 0 5px; }
.url { flex: 1; font-size: 16px; line-height: 20px; }
.selected { display: block; width: fit-content; background: #3399ff; color: #fff; border-right: 1px solid #c76a1c; outline: 0; }
.qr { width: 13px; height: 13px; }
.bolt { width: 12px; height: 14px; margin: 0 7px 0 9px; }
.down { width: 26px; height: 25px; display: grid; place-items: center; border: 1px solid #ddd; border-width: 0 1px; }
.down svg { width: 12px; height: 8px; }
.web-search { display: flex; align-items: center; width: 276px; padding: 0 10px 0 7px; }
.so { width: 22px; height: 15px; }
.web-search input { flex: 1; min-width: 0; margin-left: 2px; font-size: 15px; line-height: 20px; outline: 0; }
.web-search input::placeholder { color: #999; opacity: 1; }
.find { width: 13px; height: 13px; }
.bookmarks { display: flex; align-items: center; height: 38px; padding: 0 18px 0 10px; }
.fav { display: flex; align-items: center; gap: 3px; }
.fav svg { width: 16px; height: 15px; }
.fav .tri { margin-left: 6px; }
.bm { display: flex; align-items: center; gap: 3px; height: 21px; }
.bm svg { width: 16px; height: 16px; }
.boxed { margin: 0 6px 0 7px; padding: 0 4px 0 2px; border: 1px solid #e3e3e3; }
.bm-tools { display: flex; align-items: center; gap: 9px; margin-left: auto; }
.dots { width: 3px; height: 13px; margin-right: 4px; }
.apps { width: 16px; height: 15px; }
.tabs { display: flex; align-items: flex-end; height: 27px; padding-left: 15px; border-bottom: 1px solid #b5b5b5; margin-bottom: 1px; }
.side { width: 12px; height: 12px; margin-bottom: 7px; }
.bar { width: 1px; height: 12px; background: #ccc; margin: 0 10px 7px 13px; }
.cloud { width: 17px; height: 13px; margin: 0 9px 6px 0; }
.tab { display: flex; align-items: center; width: 222px; height: 27px; padding: 0 11px; border: 1px solid #b5b5b5; border-bottom: 0; border-radius: 4px 4px 0 0; font-size: 13px; line-height: 18px; }
.tab:not(.active) { color: #666; }
.tab span { flex: 1; margin-left: 5px; }
.tab button svg { width: 8px; height: 8px; }
.active { height: 28px; margin: 0 0 -1px 1px; background: #fff; color: #222; padding-left: 13px; }
.paw { width: 16px; height: 16px; }
.page { width: 11px; height: 13px; }
.add { width: 26px; height: 26px; display: grid; place-items: center; border-right: 1px solid #ccc; }
.add svg { width: 11px; height: 11px; }
.tab-tools { display: flex; gap: 14px; margin: 0 12px 5px auto; }
.tab-tools svg { width: 16px; height: 15px; }

/* application header */
.app { flex: 1; min-height: 0; display: flex; flex-direction: column; }
.topbar { flex: none; display: flex; align-items: center; height: 33px; padding: 0 11px 4px 19px; background: linear-gradient(#1c86c6, #2ba9ee) 0 100% / 100% 4px no-repeat, linear-gradient(90deg, #d2d4d6, #bfc3c6) 0 0 / 5px 100% no-repeat #fff; }
.home, .user, .clock, .links, .act { padding-top: 2px; }
.home svg { width: 16px; height: 15px; }
.fold { width: 18px; height: 24px; align-self: flex-start; }
.user { display: flex; align-items: center; gap: 2px; margin-left: 8px; color: #333; }
.user svg { width: 15px; height: 17px; }
.clock { display: flex; align-items: center; gap: 8px; margin-left: 12px; font-style: italic; }
.clock svg { width: 17px; height: 17px; }
.clock time { padding-top: 3px; }
.fold.right { margin-left: auto; }
.links { display: flex; gap: 6px; margin-left: 3px; }
.links a { display: flex; align-items: center; gap: 2px; }
.links svg { width: 17px; height: 17px; }
.soft { color: #444; }
.links ~ .fold.right { margin-left: 4px; }
.act { display: flex; align-items: center; gap: 4px; color: #1e90ff; margin-left: 8px; }
.exit { margin-left: 6px; }
.lock svg { width: 12px; height: 17px; }
.exit svg { width: 15px; height: 16px; }

/* work area */
.body { flex: 1; min-height: 0; display: flex; background: #f4f4f4; }
.edge { width: 5px; background: linear-gradient(90deg, #d6d8da, #bcc0c4); }
.work { flex: 1; min-width: 0; display: flex; flex-direction: column; padding: 5px 5px 0 5px; background: linear-gradient(#c4c8ca, #f4f4f4 5px); }
.main-tab { height: 20px; display: flex; }
.main-tab button { width: 48px; height: 21px; border: 1px solid #9dbac8; border-bottom: 0; border-radius: 4px 4px 0 0; background: #fff; color: #1e90ff; font-weight: bold; z-index: 1; }
.frame { flex: 1; min-height: 0; display: flex; flex-direction: column; border: 1px solid #a0bfcb; border-bottom: 0; padding: 3px 3px 4px; background: linear-gradient(#fff, #fff) 0 0 / 100% 322px no-repeat; }
.map { position: relative; flex: 1; min-height: 0; overflow: hidden; }
.canvas { width: 100%; height: 100%; }
.canvas path { fill: none; stroke-linejoin: round; }
.minor { stroke: #fbe8c2; stroke-width: 4; }
.admin { stroke: #cbc9c4; stroke-width: 4; }
.river { stroke: #b3d3e0; stroke-width: 4; }
.rail { stroke: #adadad; stroke-width: 7; }
.rail-light { stroke: #ececec; stroke-width: 6; stroke-dasharray: 30 30; }
.second { stroke: #fdd16a; stroke-width: 5; }
.major { stroke: #fdae5c; stroke-width: 7; }
.place { font-size: 11px; font-weight: 500; fill: #444; text-anchor: middle; stroke: #fcf9f2; stroke-width: 2px; paint-order: stroke; }
.city { font-size: 13px; fill: #222; }
.map-tools { position: absolute; left: 5px; top: 5px; display: flex; align-items: center; height: 29px; padding: 0 4px 0 5px; border: 2px solid #4c91cd; border-radius: 7px; background: #fff; }
.map-tools button, .map-tools label { display: flex; align-items: center; gap: 3px; margin-right: 8px; white-space: nowrap; }
.w16 { width: 16px; height: 16px; }
.w19 { width: 19px; height: 19px; }
.picker { position: relative; margin: 0 3px; }
.picker select { display: block; width: 120px; height: 21px; padding-left: 3px; appearance: none; border: 1px solid #98a4b0; background: linear-gradient(#98a4b0, #98a4b0) 103px 0 / 1px 100% no-repeat, linear-gradient(#fff, #d9dee3) 100% 0 / 15px 100% no-repeat #fff; }
.picker::after { content: ""; position: absolute; right: 4px; top: 9px; border: 4px solid transparent; border-top-color: #111; border-bottom: 0; pointer-events: none; }
input[type="checkbox"] { appearance: none; flex: none; width: 14px; height: 14px; border: 1px solid #7d8f9e; border-radius: 1px; background: linear-gradient(135deg, #dfe6ec, #fff); box-shadow: inset 0 0 0 2px #fff; }
.map-tools label { gap: 5px; margin-right: 11px; }
.map-tools .first { margin-left: 3px; }
.map-tools .zoom { appearance: none; width: 116px; height: 18px; margin-left: 3px; background: linear-gradient(#8d9aa8, #d6dbe0) 0 50% / 100% 3px no-repeat; }
.zoom::-webkit-slider-thumb { appearance: none; width: 11px; height: 18px; border: 1px solid #76828e; border-radius: 2px; background: linear-gradient(#fff, #d4d9de); }

.status { flex: none; display: flex; align-items: center; height: 20px; padding: 0 7px 0 11px; background: #4e93ce; color: #fff; }
.status span { padding-top: 5px; white-space: nowrap; }
.clip { width: 15px; height: 17px; margin-right: 5px; }
.rss { width: 15px; height: 15px; margin: 2px 6px 0 16px; }
.on { color: #45b8f3; fill: #45b8f3; }
.off { color: #9b8f86; fill: #9b8f86; }
.status .alarm { margin-left: 39px; }
.status input { width: 130px; height: 20px; margin: 0 3px 0 56px; background: #fff; border: 1px solid #8796a5; }
.glass { width: 17px; height: 17px; }
.export { display: flex; align-items: center; gap: 5px; align-self: flex-start; margin-left: auto; }
.export i { border: 6px solid transparent; border-top: 6px solid #fff; border-bottom: 0; }

.panel { flex: none; height: 170px; margin: 5px 5px 0; padding: 5px; border: 1px solid #a2b0bf; background: #fff; }
.grid { position: relative; height: 158px; display: flex; flex-direction: column; border: 1px solid #7d91a0; border-radius: 2px; }
.grid table { width: 100%; table-layout: fixed; border-collapse: collapse; }
.grid th { height: 22px; padding: 0 12px 0 0; border-right: 1px solid #c5c9cc; border-bottom: 1px solid #c3c6c9; background: linear-gradient(#fdfdfd, #d9dde2); font-weight: normal; white-space: nowrap; text-align: center; }
.grid th:last-child { border-right: 0; }
.grid th.end { text-align: right; padding-right: 3px; }
.c-s { width: 20px; }
.c-m { width: 100px; }
.c-t { width: 160px; }
.c-v { width: 119px; }
.c-e { width: 17px; }
.rows { flex: 1; display: flex; justify-content: flex-end; }
.vscroll { width: 17px; padding: 5px 0; display: flex; flex-direction: column; align-items: center; gap: 6px; border-left: 1px solid #d0d5da; }
.vscroll b { flex: 1; width: 15px; background: linear-gradient(90deg, #eef0f4, #fafafa); }
.up, .dn { border: 3px solid transparent; }
.up { border-bottom: 4px solid #ccc; border-top: 0; }
.dn { border-top: 4px solid #ccc; border-bottom: 0; }
.hrow { display: flex; height: 17px; background: #e8edf5; }
.hscroll { flex: 1; display: flex; align-items: center; margin-left: 220px; padding: 0 5px 0 8px; border: 1px solid #c9ced3; border-bottom: 0; background: linear-gradient(#dfe4e9, #f1f4f7); }
.hscroll b { width: 317px; height: 15px; margin-left: 5px; border: 1px solid #8f9ca8; border-radius: 2px; background: linear-gradient(#fff 40%, #d8dce0); }
.corner { width: 17px; }
.lt, .rt { border: 4px solid transparent; }
.lt { border-right: 4px solid #222; border-left: 0; }
.rt { border-left: 4px solid #222; border-right: 0; margin-left: auto; }
.note { position: absolute; left: 220px; top: 81px; margin: 0; color: #ee1c24; font: 15px/26px "Liberation Sans", "Noto Sans CJK SC", sans-serif; }
.sheet-tabs { display: flex; flex: none; gap: 1px; height: 20px; margin-left: 5px; }
.sheet-tabs button { width: 69px; height: 19px; border: 1px solid #4b92c8; border-radius: 0 0 4px 4px; background: linear-gradient(#4bb0f5, #1585e0); color: #fff; font-weight: bold; }
.sheet-tabs .on { width: 72px; height: 21px; margin-top: -1px; border: 1px solid #a2b0bf; border-top: 0; background: #fff; color: #1e90ff; }

/* vehicle list */
.side-panel { position: relative; flex: none; width: 246px; display: flex; flex-direction: column; border-left: 1px solid #4a78a8; background: linear-gradient(#f2f2f2, #e8e8e8); overflow: hidden; white-space: nowrap; }
.side-head { position: relative; flex: none; display: flex; align-items: center; gap: 7px; height: 50px; padding: 9px 0 0 77px; background: radial-gradient(circle at 0 1685px, #1fa4f3 1667px, transparent 1668px), linear-gradient(178deg, #0a90de, #7cc8f6 40px); color: #e2f0fa; }
.side-head svg { width: 22px; height: 24px; }
.side-head h2 { margin: 0; font-size: 17px; line-height: 22px; }
.fold-arrow { position: absolute; left: 2px; top: 18px; border: 7px solid transparent; border-left: 8px solid #fff; border-right: 0; }
.side-search { display: flex; align-items: center; height: 26px; padding: 1px 5px 0 16px; }
.side-search input { flex: 1; min-width: 0; height: 22px; margin: 0 2px 0 10px; border: 1px solid #8499ab; border-radius: 2px; background: #fff; }
.side-search svg { width: 8px; height: 14px; }
.group { display: flex; align-items: center; gap: 13px; height: 23px; margin: 14px 0 0 7px; }
.group i { border: 3px solid transparent; border-right-color: #222; border-bottom-color: #222; }
.group label { display: flex; align-items: center; gap: 5px; color: #1e90ff; }
.tree { list-style: none; margin: 0; padding: 0 0 0 35px; color: #333; }
.tree li { display: flex; align-items: center; height: 23px; }
.tree label { display: flex; align-items: center; gap: 5px; margin: 0 7px 0 1px; }
.sig { width: 15px; height: 15px; color: #aaa; fill: #aaa; }
.sm { width: 10px; height: 10px; margin-right: 6px; }
.watermark { position: absolute; right: 9px; bottom: 12px; font: 24px/34px "Noto Sans", sans-serif; color: #444; }
.side-scroll { display: flex; flex: none; align-items: flex-start; height: 9px; margin-top: auto; padding: 0 3px 0 7px; border-top: 1px solid #c9ced3; background: #e6eaee; }
.side-scroll i { margin-top: 4px; }
.side-scroll b { width: 175px; height: 16px; margin-left: 15px; border: 1px solid #8f9ca8; border-radius: 2px; background: #fbfbfb; }
```
